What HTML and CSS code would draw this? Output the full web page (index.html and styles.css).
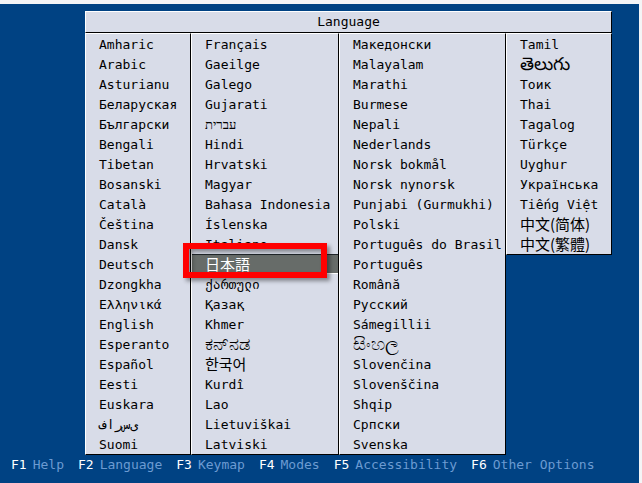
FILE: index.html
```html
<!DOCTYPE html>
<html lang="en">
<head>
<meta charset="utf-8">
<title>Language</title>
<link rel="stylesheet" href="styles.css">
</head>
<body>
<main class="screen">
  <section class="panel" aria-labelledby="panel-title">
    <h1 class="title" id="panel-title">Language</h1>
    <div class="columns">
      <ul class="column">
        <li><button class="item">Amharic</button></li>
        <li><button class="item">Arabic</button></li>
        <li><button class="item">Asturianu</button></li>
        <li><button class="item">Беларуская</button></li>
        <li><button class="item">Български</button></li>
        <li><button class="item">Bengali</button></li>
        <li><button class="item">Tibetan</button></li>
        <li><button class="item">Bosanski</button></li>
        <li><button class="item">Català</button></li>
        <li><button class="item">Čeština</button></li>
        <li><button class="item">Dansk</button></li>
        <li><button class="item">Deutsch</button></li>
        <li><button class="item">Dzongkha</button></li>
        <li><button class="item">Ελληνικά</button></li>
        <li><button class="item">English</button></li>
        <li><button class="item">Esperanto</button></li>
        <li><button class="item">Español</button></li>
        <li><button class="item">Eesti</button></li>
        <li><button class="item">Euskara</button></li>
        <li><button class="item item-ltr" lang="fa">ف&zwnj;ا&zwnj;ر&zwnj;س&zwnj;ی</button></li>
        <li><button class="item">Suomi</button></li>
      </ul>
      <ul class="column">
        <li><button class="item">Français</button></li>
        <li><button class="item">Gaeilge</button></li>
        <li><button class="item">Galego</button></li>
        <li><button class="item">Gujarati</button></li>
        <li><button class="item" lang="he">עברית</button></li>
        <li><button class="item">Hindi</button></li>
        <li><button class="item">Hrvatski</button></li>
        <li><button class="item">Magyar</button></li>
        <li><button class="item">Bahasa Indonesia</button></li>
        <li><button class="item">Íslenska</button></li>
        <li><button class="item">Italiano</button></li>
        <li class="marked"><button class="item item-selected item-cjk" lang="ja">日本語</button></li>
        <li><button class="item" lang="ka">ქართული</button></li>
        <li><button class="item">Қазақ</button></li>
        <li><button class="item">Khmer</button></li>
        <li><button class="item item-indic" lang="kn">ಕನ್&zwnj;ನಡ</button></li>
        <li><button class="item item-cjk" lang="ko">한국어</button></li>
        <li><button class="item">Kurdî</button></li>
        <li><button class="item">Lao</button></li>
        <li><button class="item">Lietuviškai</button></li>
        <li><button class="item">Latviski</button></li>
      </ul>
      <ul class="column">
        <li><button class="item">Македонски</button></li>
        <li><button class="item">Malayalam</button></li>
        <li><button class="item">Marathi</button></li>
        <li><button class="item">Burmese</button></li>
        <li><button class="item">Nepali</button></li>
        <li><button class="item">Nederlands</button></li>
        <li><button class="item">Norsk bokmål</button></li>
        <li><button class="item">Norsk nynorsk</button></li>
        <li><button class="item">Punjabi (Gurmukhi)</button></li>
        <li><button class="item">Polski</button></li>
        <li><button class="item">Português do Brasil</button></li>
        <li><button class="item">Português</button></li>
        <li><button class="item">Română</button></li>
        <li><button class="item">Русский</button></li>
        <li><button class="item">Sámegillii</button></li>
        <li><button class="item item-indic" lang="si">සිංහල</button></li>
        <li><button class="item">Slovenčina</button></li>
        <li><button class="item">Slovenščina</button></li>
        <li><button class="item">Shqip</button></li>
        <li><button class="item">Српски</button></li>
        <li><button class="item">Svenska</button></li>
      </ul>
      <ul class="column">
        <li><button class="item">Tamil</button></li>
        <li><button class="item item-indic" lang="te">తెలుగు</button></li>
        <li><button class="item">Тоик</button></li>
        <li><button class="item">Thai</button></li>
        <li><button class="item">Tagalog</button></li>
        <li><button class="item">Türkçe</button></li>
        <li><button class="item">Uyghur</button></li>
        <li><button class="item">Українська</button></li>
        <li><button class="item">Tiếng Việt</button></li>
        <li><button class="item item-cjk" lang="zh-Hans">中文(简体)</button></li>
        <li><button class="item item-cjk" lang="zh-Hant">中文(繁體)</button></li>
      </ul>
    </div>
  </section>
  <nav class="keys" aria-label="Function keys">
    <button class="key"><kbd>F1</kbd><span>Help</span></button>
    <button class="key"><kbd>F2</kbd><span>Language</span></button>
    <button class="key"><kbd>F3</kbd><span>Keymap</span></button>
    <button class="key"><kbd>F4</kbd><span>Modes</span></button>
    <button class="key"><kbd>F5</kbd><span>Accessibility</span></button>
    <button class="key"><kbd>F6</kbd><span>Other Options</span></button>
  </nav>
</main>
</body>
</html>
```
FILE: styles.css
```css
* {
  box-sizing: border-box;
}

body {
  margin: 0;
  background: #f8f8fa;
  font: 13px/20px "DejaVu Sans Mono", "Noto Sans CJK JP", monospace;
  color: #000;
}

button,
kbd {
  font: inherit;
}

.screen {
  min-height: 100vh;
  padding: 7px 27px 0 85px;
  border: solid #f4f4f6;
  border-width: 4px 3px 0 0;
  background: #004283;
}

.title {
  margin: 0;
  border: 1px solid;
  border-color: #fff #000 #000 #fff;
  background: #d8dce8;
  font-size: 13px;
  font-weight: 400;
  line-height: 20px;
  text-align: center;
}

.columns {
  display: grid;
  grid-template-columns: 106fr 148fr 167fr 106fr;
  align-items: start;
}

.column {
  margin: 0;
  padding: 0;
  min-width: 0;
  list-style: none;
  border: 1px solid;
  border-color: #fff #000 #000 #fff;
  background: #d8dce8;
}

.item {
  display: block;
  width: 100%;
  height: 20px;
  padding: 1px 0 0 13px;
  border: 0;
  background: none;
  color: inherit;
  line-height: 20px;
  text-align: left;
  white-space: nowrap;
}

.item-ltr {
  direction: ltr;
  unicode-bidi: bidi-override;
}

.item-indic {
  padding-top: 0;
  font-size: 18px;
  line-height: 18px;
}

.item-cjk {
  padding-top: 0;
  font-family: "Noto Sans CJK JP", sans-serif;
  font-size: 15px;
  font-weight: 400;
}

.item-cjk:lang(ko) {
  font-family: "Noto Sans CJK KR", sans-serif;
}

.item-cjk:lang(zh-Hans) {
  font-family: "Noto Sans CJK SC", sans-serif;
}

.item-cjk:lang(zh-Hant) {
  font-family: "Noto Sans CJK TC", sans-serif;
}

.item-selected {
  border: solid;
  border-width: 1px 0;
  border-color: #20262a #fff #fff;
  background: #676c69;
  color: #fff;
  line-height: 18px;
}

.marked {
  position: relative;
}

/* Callout frame drawn over the selected entry */
.marked::after {
  content: "";
  position: absolute;
  top: -11px;
  right: 11px;
  bottom: -4px;
  left: -9px;
  border: 6px solid #f00;
  box-shadow: 3px 3px 4px rgba(0, 0, 0, 0.4), inset 3px 3px 4px rgba(0, 0, 0, 0.4);
  pointer-events: none;
}

.keys {
  display: flex;
  gap: 14px;
  margin: 0 -27px 0 -74px;
}

.key {
  display: flex;
  gap: 6px;
  padding: 0;
  border: 0;
  background: none;
  color: #6c9bd2;
  line-height: 20px;
  white-space: nowrap;
}

.key kbd {
  color: #fff;
}
```
